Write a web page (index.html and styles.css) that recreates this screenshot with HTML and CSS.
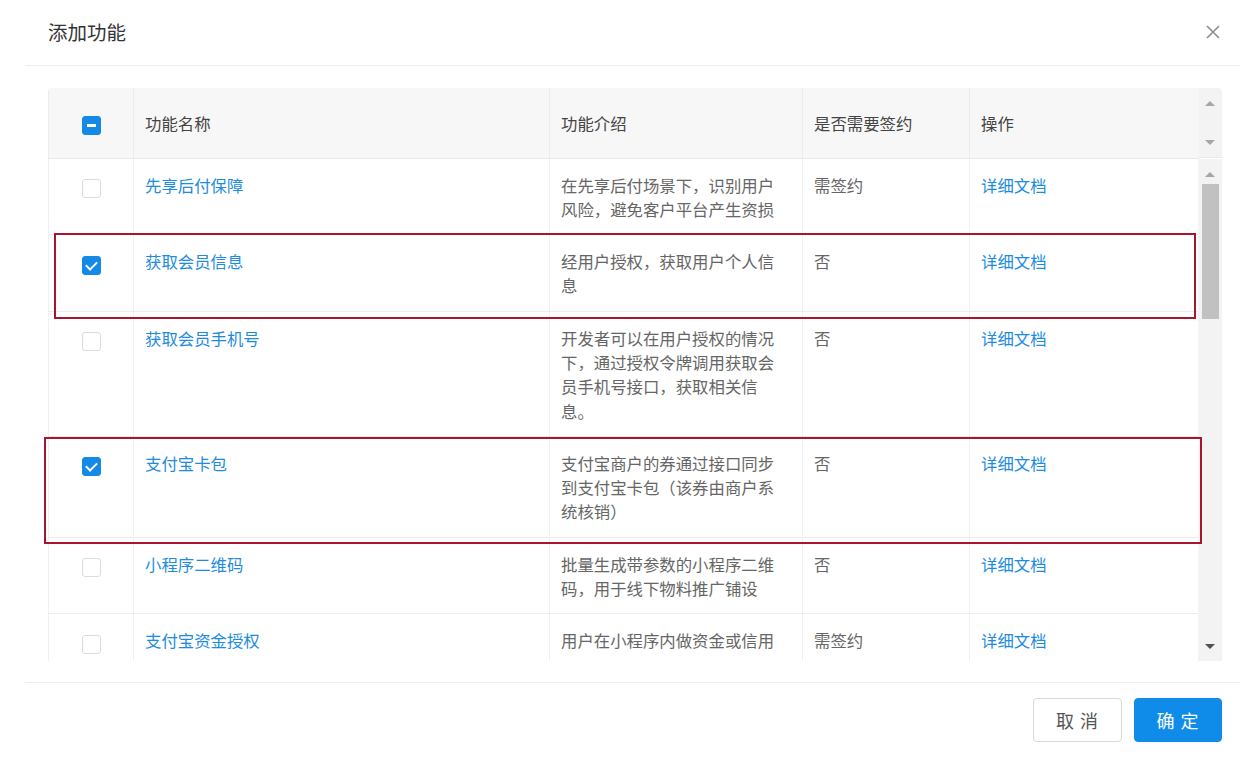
FILE: index.html
```html
<!DOCTYPE html>
<html lang="zh-CN">
<head>
<meta charset="utf-8">
<title>添加功能</title>
<link rel="stylesheet" href="styles.css">
</head>
<body>
<div class="modal">
  <div class="modal-header">
    <div class="modal-title">添加功能</div>
    <span class="modal-close">
      <svg width="14" height="14" viewBox="0 0 14 14"><path d="M1 1L13 13M13 1L1 13" stroke="#8c8c8c" stroke-width="1.6" fill="none"/></svg>
    </span>
  </div>
  <div class="modal-body">
    <div class="table-wrap">
      <div class="thead-row">
        <table class="tbl">
          <colgroup><col class="c1"><col class="c2"><col class="c3"><col class="c4"><col class="c5"></colgroup>
          <thead>
            <tr>
              <th class="cb-cell"><span class="cb indeterminate"></span></th>
              <th>功能名称</th>
              <th>功能介绍</th>
              <th>是否需要签约</th>
              <th>操作</th>
            </tr>
          </thead>
        </table>
        <div class="gutter head-gutter">
          <span class="arr up light"></span>
          <span class="arr down light"></span>
        </div>
      </div>
      <div class="tbody-row">
        <div class="viewport">
          <table class="tbl">
            <colgroup><col class="c1"><col class="c2"><col class="c3"><col class="c4"><col class="c5"></colgroup>
            <tbody>
              <tr>
                <td class="cb-cell"><span class="cb"></span></td>
                <td><a class="link">先享后付保障</a></td>
                <td class="desc">在先享后付场景下，识别用户风险，避免客户平台产生资损</td>
                <td class="desc">需签约</td>
                <td><a class="link">详细文档</a></td>
              </tr>
              <tr>
                <td class="cb-cell"><span class="cb checked"></span></td>
                <td><a class="link">获取会员信息</a></td>
                <td class="desc">经用户授权，获取用户个人信息</td>
                <td class="desc">否</td>
                <td><a class="link">详细文档</a></td>
              </tr>
              <tr>
                <td class="cb-cell"><span class="cb"></span></td>
                <td><a class="link">获取会员手机号</a></td>
                <td class="desc">开发者可以在用户授权的情况下，通过授权令牌调用获取会员手机号接口，获取相关信息。</td>
                <td class="desc">否</td>
                <td><a class="link">详细文档</a></td>
              </tr>
              <tr>
                <td class="cb-cell"><span class="cb checked"></span></td>
                <td><a class="link">支付宝卡包</a></td>
                <td class="desc">支付宝商户的券通过接口同步到支付宝卡包（该券由商户系统核销）</td>
                <td class="desc">否</td>
                <td><a class="link">详细文档</a></td>
              </tr>
              <tr>
                <td class="cb-cell"><span class="cb"></span></td>
                <td><a class="link">小程序二维码</a></td>
                <td class="desc">批量生成带参数的小程序二维码，用于线下物料推广铺设</td>
                <td class="desc">否</td>
                <td><a class="link">详细文档</a></td>
              </tr>
              <tr>
                <td class="cb-cell"><span class="cb"></span></td>
                <td><a class="link">支付宝资金授权</a></td>
                <td class="desc">用户在小程序内做资金或信用</td>
                <td class="desc">需签约</td>
                <td><a class="link">详细文档</a></td>
              </tr>
            </tbody>
          </table>
        </div>
        <div class="gutter body-gutter">
          <span class="arr up light"></span>
          <span class="thumb"></span>
          <span class="spacer"></span>
          <span class="arr down dark"></span>
        </div>
      </div>
      <div class="mark mark-1"></div>
      <div class="mark mark-2"></div>
    </div>
  </div>
  <div class="modal-footer">
    <button class="btn">取 消</button>
    <button class="btn primary">确 定</button>
  </div>
</div>
</body>
</html>
```
FILE: styles.css
```css
* { box-sizing: border-box; }
html, body { margin: 0; padding: 0; background: #fff; }
body {
  font-family: "Noto Sans CJK SC", "Noto Sans", "Liberation Sans", sans-serif;
  color: #555;
  width: 1253px;
  height: 759px;
  overflow: hidden;
}
.modal {
  margin: 0 13px 0 25px;
  display: flex;
  flex-direction: column;
}
.modal-header {
  height: 66px;
  border-bottom: 1px solid #eeeeee;
  display: flex;
  align-items: center;
  justify-content: space-between;
  padding: 0 20px 2px 23px;
}
.modal-title {
  font-size: 19.5px;
  color: #333;
  line-height: 26px;
}
.modal-close { display: flex; align-items: center; }
.modal-body {
  padding: 22px 18px 0 23px;
  height: 616px;
}
.table-wrap {
  position: relative;
  width: 1174px;
}
.thead-row, .tbody-row { display: flex; }
.tbl {
  width: 1150px;
  table-layout: fixed;
  border-collapse: collapse;
  font-size: 16.4px;
  line-height: 24.3px;
}
.c1 { width: 85px; }
.c2 { width: 416px; }
.c3 { width: 253px; }
.c4 { width: 167px; }
.c5 { width: 229px; }
.tbl th {
  height: 70px;
  background: #f7f7f7;
  text-align: left;
  font-weight: normal;
  color: #444;
  padding: 0 12px 0 11px;
  border-left: 1px solid #ececec;
  border-bottom: 1px solid #e8e8e8;
}
.thead-row .tbl { border-top-left-radius: 4px; overflow: hidden; }
.tbl td {
  vertical-align: top;
  padding: 14px 12px 13px 11px;
  border-left: 1px solid #f0f0f0;
  border-bottom: 1px solid #ececec;
  color: #666;
}
.tbl th.cb-cell, .tbl td.cb-cell {
  text-align: center;
  padding-left: 0;
  padding-right: 0;
}
.tbl th.cb-cell { vertical-align: middle; }
.link { color: #1d8ce0; text-decoration: none; cursor: pointer; }
.desc { color: #666; }
.cb {
  display: inline-block;
  width: 19px;
  height: 19px;
  border: 1px solid #dcdcdc;
  border-radius: 3px;
  background: #fff;
  vertical-align: middle;
  position: relative;
  margin-top: 3px;
}
.tbl th .cb { margin-top: 0; }
.cb.checked, .cb.indeterminate {
  background: #1589e6;
  border-color: #1589e6;
}
.cb.checked::after {
  content: "";
  position: absolute;
  left: 5px;
  top: 2px;
  width: 5px;
  height: 9px;
  border: solid #fff;
  border-width: 0 2.5px 2.5px 0;
  transform: rotate(45deg);
}
.cb.indeterminate::after {
  content: "";
  position: absolute;
  left: 4px;
  top: 7.5px;
  width: 9px;
  height: 2.5px;
  background: #fff;
}
.viewport {
  width: 1150px;
  height: 502px;
  overflow: hidden;
}
.gutter {
  width: 24px;
  background: #f3f3f3;
  display: flex;
  flex-direction: column;
  align-items: center;
}
.head-gutter {
  height: 70px;
  justify-content: space-between;
  padding: 10px 0 9px;
  border-top-right-radius: 4px;
  border-bottom: 1px solid #e8e8e8;
}
.body-gutter {
  height: 502px;
  padding: 10px 0 9px;
}
.arr {
  width: 0;
  height: 0;
  border-left: 5px solid transparent;
  border-right: 5px solid transparent;
}
.arr.up { border-bottom: 5px solid #a6a6a6; margin: 3px 0; }
.arr.down { border-top: 5px solid #a6a6a6; margin: 3px 0; }
.arr.down.dark { border-top-color: #505050; }
.thumb {
  width: 17px;
  height: 135px;
  background: #c1c1c1;
  margin-top: 4px;
}
.spacer { flex: 1; }
.mark {
  position: absolute;
  border: 2px solid #a8152f;
  pointer-events: none;
}
.mark-1 { left: 6px; top: 145px; width: 1142px; height: 86px; }
.mark-2 { left: -4px; top: 349px; width: 1158px; height: 107px; }
.modal-footer {
  border-top: 1px solid #eeeeee;
  padding: 15px 18px 0 0;
  display: flex;
  justify-content: flex-end;
  gap: 12px;
}
.btn {
  font-family: "Noto Sans CJK SC", "Noto Sans", sans-serif;
  width: 89px;
  height: 44px;
  border: 1px solid #d9d9d9;
  border-radius: 4px;
  background: #fff;
  color: #555;
  font-size: 18px;
  line-height: 1;
  padding: 0;
  letter-spacing: 1px;
}
.btn.primary {
  background: #0f8ce9;
  border-color: #0f8ce9;
  color: #fff;
  width: 88px;
}
```
